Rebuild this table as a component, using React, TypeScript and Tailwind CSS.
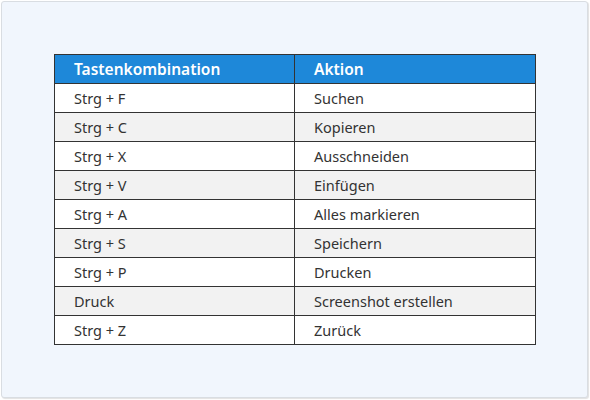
const rows: [string, string][] = [
  ['Strg + F', 'Suchen'],
  ['Strg + C', 'Kopieren'],
  ['Strg + X', 'Ausschneiden'],
  ['Strg + V', 'Einfügen'],
  ['Strg + A', 'Alles markieren'],
  ['Strg + S', 'Speichern'],
  ['Strg + P', 'Drucken'],
  ['Druck', 'Screenshot erstellen'],
  ['Strg + Z', 'Zurück'],
];

export default function App() {
  return (
    <div className="w-[590px] h-[400px] bg-white p-px">
      <div
        className="w-[587px] h-[397px] rounded-[3px] border border-[#d9dde2] bg-[#f1f6fd] shadow-[1px_1px_1px_rgba(0,0,0,0.12)] pt-[52px] pl-[52px]"
        style={{ fontFamily: '"Noto Sans", sans-serif' }}
      >
        <table className="border-collapse w-[482px] text-[14.5px] text-[#333]">
          <thead>
            <tr className="bg-[#1e88d9] text-white h-[29px]">
              <th className="border border-[#333] w-[240px] text-left pl-[19px] pt-[1px] font-semibold text-[15.5px]">
                Tastenkombination
              </th>
              <th className="border border-[#333] text-left pl-[19px] pt-[1px] font-semibold text-[15.5px]">
                Aktion
              </th>
            </tr>
          </thead>
          <tbody>
            {rows.map(([k, a], i) => (
              <tr key={k + a} className={`h-[29px] ${i % 2 === 1 ? 'bg-[#f2f2f2]' : 'bg-white'}`}>
                <td className="border border-[#333] pl-[19px] pt-[2px]">{k}</td>
                <td className="border border-[#333] pl-[19px] pt-[2px]">{a}</td>
              </tr>
            ))}
          </tbody>
        </table>
      </div>
    </div>
  );
}
